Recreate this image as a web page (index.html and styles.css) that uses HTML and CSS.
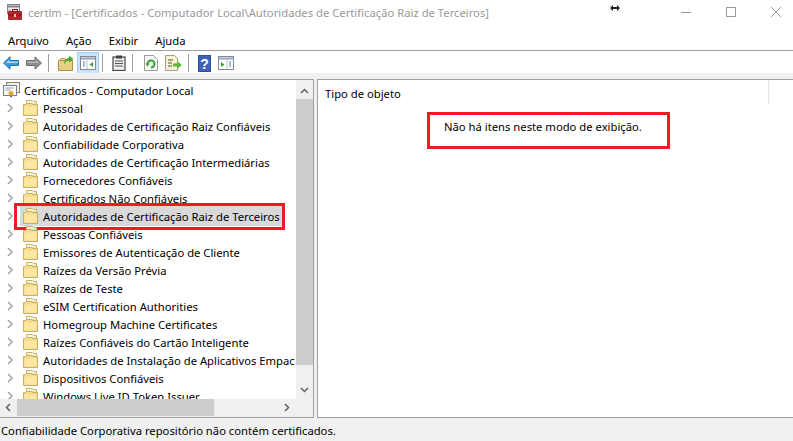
FILE: index.html
```html
<!DOCTYPE html>
<html lang="pt-BR">
  <head>
    <meta charset="UTF-8" />
    <title>certlm</title>
    <link rel="stylesheet" href="styles.css">
  </head>
  <body>
    <svg class="defs" width="0" height="0">
      <symbol id="folder" viewBox="0 0 15 16">
        <path d="M3.500 3.500V.5h6l1 1h3v3z" fill="#fbf3d2" stroke="#c9b06a"/>
        <path d="M.5 15.500v-11h2l1-1h5l1 1h5v11z" fill="#f6d98a" stroke="#c9ae68"/>
        <path d="M1.500 14.500v-8h12v8z" fill="#fbe6a2"/>
      </symbol>
      <symbol id="chev" viewBox="0 0 7 10">
        <path d="M1 1l4 4-4 4" fill="none" stroke="#a6a6a6" stroke-width="1.600"/>
      </symbol>
    </svg>

    <div class="titlebar">
      <svg class="app-icon" width="16" height="16" viewBox="0 0 16 16">
        <rect x="1.500" y=".5" width="12" height="9" fill="#f2f2f2" stroke="#858585"/>
        <path d="M2 2.500h11" stroke="#858585" stroke-width="2"/>
        <path d="M2 6h3M2 8h3" stroke="#aaa"/>
        <rect x="2" y="7" width="14" height="9" rx="1" fill="#b3262b"/>
        <path d="M2 11h14" stroke="#7a1216"/>
        <rect x="6.500" y="5.500" width="5" height="2" fill="none" stroke="#7a1216"/>
        <rect x="8" y="10" width="2" height="3" fill="#e9c9a0"/>
      </svg>
      <span class="title">certlm - [Certificados - Computador Local\Autoridades de Certificação Raiz de Terceiros]</span>
      <svg class="resize" width="10" height="6" viewBox="0 0 10 6">
        <path d="M0 3l3-3v2h4V0l3 3-3 3V4H3v2z" fill="#222"/>
      </svg>
      <div class="window-btns">
        <svg width="10" height="10" viewBox="0 0 10 10"><path d="M0 5.500h10" stroke="#999"/></svg>
        <svg width="10" height="10" viewBox="0 0 10 10"><rect x=".5" y=".5" width="9" height="9" fill="none" stroke="#999"/></svg>
        <svg width="10" height="10" viewBox="0 0 10 10"><path d="M0 0l10 10M10 0L0 10" stroke="#999"/></svg>
      </div>
    </div>

    <div class="menubar">
      <span>Arquivo</span><span>Ação</span><span>Exibir</span><span>Ajuda</span>
    </div>

    <div class="toolbar">
      <svg class="tool" width="16" height="14" viewBox="0 0 16 14"><path d="M.5 7L7 .8v3.700h8.500v5H7v3.700z" fill="#3d9be0" stroke="#1f6fb5"/><path d="M3 7l3.500-3.500v2h8.500V7z" fill="#a6d8f7"/></svg>
      <svg class="tool" width="16" height="14" viewBox="0 0 16 14"><path d="M15.500 7L9 .8v3.700H.5v5H9v3.700z" fill="#8f8f8f" stroke="#6e6e6e"/><path d="M1.500 5.500H10v-2l3 3.500H1.500z" fill="#b5b5b5"/></svg>
      <i class="sep"></i>
      <svg class="tool up" width="16" height="16" viewBox="0 0 16 16"><path d="M.5 15.500v-10h14v10z" fill="#e8cf86" stroke="#a98f4a"/><path d="M2 5.500l1-2h4l1 2z" fill="#f3e2a8" stroke="#a98f4a"/><path d="M6 10c0-4 2-7 5-7V.5L15.500 4 11 7.500V5C9 5 7.500 7 6 10z" fill="#46a92f"/></svg>
      <div class="tool-on">
        <svg width="16" height="14" viewBox="0 0 16 14"><rect x=".5" y=".5" width="15" height="13" fill="#fff" stroke="#7d8a99"/><path d="M1 1.500h14v2H1z" fill="#98a5b3"/><path d="M3 6h2M3 8h2M3 10h2" stroke="#4a7fb5"/><path d="M7 4v9" stroke="#b8c2cc"/><path d="M13 6v5L9.500 8.500z" fill="#3aa23a"/></svg>
      </div>
      <i class="sep"></i>
      <svg class="tool" width="14" height="16" viewBox="0 0 14 16"><rect x="1" y="2" width="12" height="13.500" fill="#eee" stroke="#444" stroke-width="1.200"/><rect x="4" y=".5" width="6" height="3" fill="#444"/><path d="M3 6h8M3 8.500h8M3 11h8" stroke="#555"/></svg>
      <i class="sep"></i>
      <svg class="tool refresh" width="14" height="16" viewBox="0 0 14 16"><path d="M.5.500h9l4 4v11H.5z" fill="#f7f7f7" stroke="#9a9a9a"/><path d="M3.500 9a3.500 3.500 0 1 1 3.500 3.500" fill="none" stroke="#37a02f" stroke-width="2"/><path d="M1.500 8.500h4l-2 3z" fill="#37a02f"/></svg>
      <svg class="tool" width="17" height="16" viewBox="0 0 17 16"><path d="M.5.500h9l3 3v12H.5z" fill="#f8f1d2" stroke="#a5a08a"/><path d="M3 5h5M3 8h4M3 11h4" stroke="#555"/><path d="M8 8.500h4V6l5 4-5 4v-2.500H8z" fill="#5fb83f"/></svg>
      <i class="sep"></i>
      <svg class="tool" width="13" height="17" viewBox="0 0 13 17"><rect width="13" height="17" fill="#2f4da0"/><rect x="1" y="1" width="11" height="15" fill="#3f63bd"/><text x="6.500" y="13.500" text-anchor="middle" class="help-q">?</text></svg>
      <svg class="tool" width="16" height="14" viewBox="0 0 16 14"><rect x=".5" y=".5" width="15" height="13" fill="#fff" stroke="#7d8a99"/><path d="M1 1.500h14v2H1z" fill="#98a5b3"/><path d="M3 6v5l3.500-2.500z" fill="#3aa23a"/><path d="M9 4v9" stroke="#b8c2cc"/><path d="M11 6h2M11 8h2M11 10h2" stroke="#4a7fb5"/></svg>
    </div>

    <div class="main">
      <div class="tree-pane">
        <div class="tree-body">
          <div class="tree">
            <div class="root">
              <svg width="17" height="16" viewBox="0 0 17 16"><rect x="3.500" y=".5" width="13" height="10" fill="#f4efe0" stroke="#8a7f6a"/><rect x=".5" y="3.500" width="13" height="10" fill="#fbf7ea" stroke="#6f7f95"/><path d="M2.500 6h8M2.500 8h5" stroke="#9aa7b8"/><circle cx="8" cy="11.500" r="2.500" fill="#e0a82e"/><path d="M7 13.500v2l1-.7 1 .7v-2" fill="#3a69b5"/></svg>
              <span>Certificados - Computador Local</span>
            </div>
            <div class="row"><svg class="chev"><use href="#chev"/></svg><svg class="ficon"><use href="#folder"/></svg><span>Pessoal</span></div>
            <div class="row"><svg class="chev"><use href="#chev"/></svg><svg class="ficon"><use href="#folder"/></svg><span>Autoridades de Certificação Raiz Confiáveis</span></div>
            <div class="row"><svg class="chev"><use href="#chev"/></svg><svg class="ficon"><use href="#folder"/></svg><span>Confiabilidade Corporativa</span></div>
            <div class="row"><svg class="chev"><use href="#chev"/></svg><svg class="ficon"><use href="#folder"/></svg><span>Autoridades de Certificação Intermediárias</span></div>
            <div class="row"><svg class="chev"><use href="#chev"/></svg><svg class="ficon"><use href="#folder"/></svg><span>Fornecedores Confiáveis</span></div>
            <div class="row"><svg class="chev"><use href="#chev"/></svg><svg class="ficon"><use href="#folder"/></svg><span>Certificados Não Confiáveis</span></div>
            <div class="row selected"><svg class="chev"><use href="#chev"/></svg><svg class="ficon"><use href="#folder"/></svg><span>Autoridades de Certificação Raiz de Terceiros</span><i class="mark"></i></div>
            <div class="row"><svg class="chev"><use href="#chev"/></svg><svg class="ficon"><use href="#folder"/></svg><span>Pessoas Confiáveis</span></div>
            <div class="row"><svg class="chev"><use href="#chev"/></svg><svg class="ficon"><use href="#folder"/></svg><span>Emissores de Autenticação de Cliente</span></div>
            <div class="row"><svg class="chev"><use href="#chev"/></svg><svg class="ficon"><use href="#folder"/></svg><span>Raízes da Versão Prévia</span></div>
            <div class="row"><svg class="chev"><use href="#chev"/></svg><svg class="ficon"><use href="#folder"/></svg><span>Raízes de Teste</span></div>
            <div class="row"><svg class="chev"><use href="#chev"/></svg><svg class="ficon"><use href="#folder"/></svg><span>eSIM Certification Authorities</span></div>
            <div class="row"><svg class="chev"><use href="#chev"/></svg><svg class="ficon"><use href="#folder"/></svg><span>Homegroup Machine Certificates</span></div>
            <div class="row"><svg class="chev"><use href="#chev"/></svg><svg class="ficon"><use href="#folder"/></svg><span>Raízes Confiáveis do Cartão Inteligente</span></div>
            <div class="row"><svg class="chev"><use href="#chev"/></svg><svg class="ficon"><use href="#folder"/></svg><span>Autoridades de Instalação de Aplicativos Empac</span></div>
            <div class="row"><svg class="chev"><use href="#chev"/></svg><svg class="ficon"><use href="#folder"/></svg><span>Dispositivos Confiáveis</span></div>
            <div class="row"><svg class="chev"><use href="#chev"/></svg><svg class="ficon"><use href="#folder"/></svg><span>Windows Live ID Token Issuer</span></div>
          </div>
          <div class="vscroll">
            <svg width="9" height="6" viewBox="0 0 9 6"><path d="M1 5l3.500-3.500L8 5" fill="none" stroke="#606060" stroke-width="1.500"/></svg>
            <div class="vtrack"><div class="vthumb"></div></div>
            <svg width="9" height="6" viewBox="0 0 9 6"><path d="M1 1l3.500 3.500L8 1" fill="none" stroke="#606060" stroke-width="1.500"/></svg>
          </div>
        </div>
        <div class="hscroll">
          <svg width="6" height="9" viewBox="0 0 6 9"><path d="M5 1L1.500 4.500 5 8" fill="none" stroke="#606060" stroke-width="1.500"/></svg>
          <div class="htrack"><div class="hthumb"></div></div>
          <svg width="6" height="9" viewBox="0 0 6 9"><path d="M1 1l3.500 3.500L1 8" fill="none" stroke="#606060" stroke-width="1.500"/></svg>
        </div>
      </div>
      <div class="list-pane">
        <div class="list-head"><span>Tipo de objeto</span></div>
        <div class="empty">Não há itens neste modo de exibição.</div>
      </div>
    </div>

    <div class="statusbar">Confiabilidade Corporativa repositório não contém certificados.</div>
  </body>
</html>
```

FILE: styles.css
```css
html,
body {
  margin: 0;
  height: 100%;
}
body {
  width: 793px;
  height: 441px;
  overflow: hidden;
  background: #fff;
  font-family: "Noto Sans", Arial, sans-serif;
  font-size: 11.25px;
  color: #000;
  display: flex;
  flex-direction: column;
}
.defs {
  position: absolute;
}
.titlebar {
  height: 30px;
  box-sizing: border-box;
  padding-bottom: 6px;
  display: flex;
  align-items: center;
  flex: none;
}
.app-icon {
  margin-left: 6px;
}
.title {
  margin-left: 6px;
  color: #999;
  white-space: nowrap;
}
.resize {
  margin: -8px 0 0 121px;
}
.window-btns {
  margin-left: auto;
  padding-right: 12px;
  display: flex;
  gap: 35px;
}
.menubar {
  height: 20px;
  display: flex;
  align-items: center;
  gap: 17px;
  padding-left: 8px;
  border-bottom: 1px solid #a0a0a0;
  flex: none;
}
.toolbar {
  height: 22px;
  box-sizing: border-box;
  padding: 2px 0 0 3px;
  display: flex;
  align-items: center;
  flex: none;
}
.tool {
  margin-right: 7px;
  flex: none;
}
.tool.up {
  margin-right: 3px;
}
.tool.refresh {
  margin-left: 2px;
}
.sep {
  width: 1px;
  height: 18px;
  background: #a0a0a0;
  margin: 0 9px 0 -1px;
  flex: none;
}
.tool-on {
  width: 20px;
  height: 20px;
  background: #cce4f7;
  border: 1px solid #99d1ff;
  display: flex;
  align-items: center;
  justify-content: center;
  margin-right: 4px;
  flex: none;
}
.help-q {
  font: bold 14px "Liberation Sans", Arial, sans-serif;
  fill: #fff;
}
.main {
  flex: 1;
  display: flex;
  min-height: 0;
  box-sizing: border-box;
  padding-top: 6px;
  background: #f0f0f0;
}
.tree-pane {
  width: 313px;
  border-top: 1px solid #a0a0a0;
  border-right: 1px solid #a0a0a0;
  border-bottom: 1px solid #a0a0a0;
  display: flex;
  flex-direction: column;
  flex: none;
}
.tree-body {
  flex: 1;
  display: flex;
  min-height: 0;
}
.tree {
  flex: 1;
  min-width: 0;
  padding-top: 1px;
  background: #fff;
  overflow: hidden;
}
.root {
  height: 18px;
  display: flex;
  align-items: center;
  gap: 4px;
  padding-left: 3px;
  white-space: nowrap;
}
.row {
  height: 18px;
  display: flex;
  align-items: center;
  white-space: nowrap;
  position: relative;
}
.chev {
  width: 7px;
  height: 10px;
  margin-left: 7px;
  flex: none;
}
.ficon {
  width: 15px;
  height: 16px;
  margin: 0 5px 0 9px;
  flex: none;
}
.selected::before {
  content: "";
  position: absolute;
  left: 20px;
  right: 13px;
  top: -1px;
  bottom: -1px;
  background: #d9d9d9;
}
.selected svg,
.selected span {
  position: relative;
}
.mark {
  position: absolute;
  left: 14px;
  top: -4px;
  width: 265px;
  height: 21px;
  border: 3px solid #ed1c24;
}
.vscroll {
  width: 17px;
  background: #f0f0f0;
  display: flex;
  flex-direction: column;
  align-items: center;
  flex: none;
  padding: 8px 0 6px;
  box-sizing: border-box;
}
.vtrack {
  flex: 1;
  width: 100%;
  margin: 5px 0;
}
.vthumb {
  height: 266px;
  background: #cdcdcd;
}
.hscroll {
  height: 17px;
  margin-bottom: 1px;
  background: #f0f0f0;
  display: flex;
  align-items: center;
  padding: 0 23px 0 5px;
  flex: none;
}
.htrack {
  flex: 1;
  height: 100%;
  margin: 0 6px;
}
.hthumb {
  width: 197px;
  height: 100%;
  background: #cdcdcd;
}
.list-pane {
  flex: 1;
  margin-left: 3px;
  background: #fff;
  border-top: 1px solid #a0a0a0;
  border-left: 1px solid #a0a0a0;
  border-bottom: 1px solid #a0a0a0;
}
.list-head {
  box-sizing: border-box;
  height: 24px;
  width: 451px;
  margin-top: 1px;
  padding-left: 7px;
  display: flex;
  align-items: center;
  border-right: 1px solid #e5e5e5;
}
.empty {
  box-sizing: border-box;
  width: 243px;
  height: 37px;
  margin: 7px 0 0 109px;
  border: 3px solid #ed1c24;
  padding: 4px 0 0 14px;
}
.statusbar {
  height: 23px;
  box-sizing: border-box;
  flex: none;
  background: #f0f0f0;
  padding: 5px 0 0 1px;
  white-space: nowrap;
}
```
